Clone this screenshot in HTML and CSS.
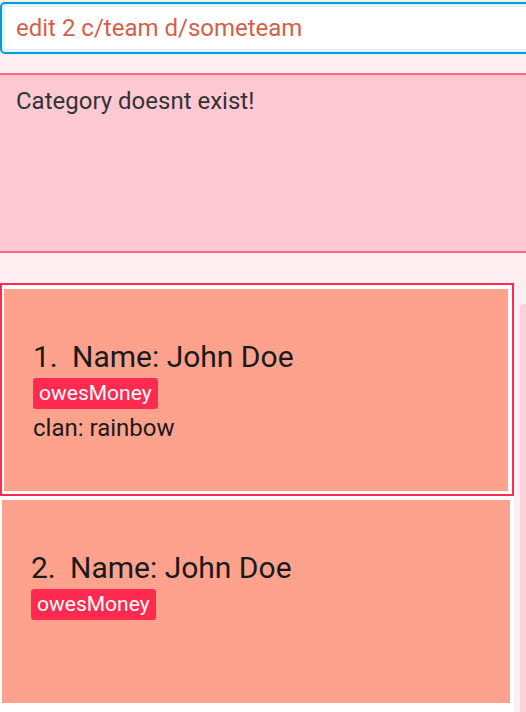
FILE: index.html
```html
<!DOCTYPE html>
<html>
<head>
<meta charset="utf-8">
<link rel="stylesheet" href="styles.css">
</head>
<body>
<div class="app">
  <div class="command">
    <div class="command-field">edit 2 c/team d/someteam</div>
  </div>
  <div class="result">Category doesnt exist!</div>
  <div class="list-area">
    <div class="list">
      <div class="cell selected">
        <div class="card">
          <div class="name-row"><span class="index">1.</span><span class="name">Name: John Doe</span></div>
          <div class="tags"><span class="tag">owesMoney</span></div>
          <div class="clan">clan: rainbow</div>
        </div>
      </div>
      <div class="cell">
        <div class="card">
          <div class="name-row"><span class="index">2.</span><span class="name">Name: John Doe</span></div>
          <div class="tags"><span class="tag">owesMoney</span></div>
        </div>
      </div>
    </div>
    <div class="scroll-track"><div class="scroll-thumb"></div></div>
  </div>
</div>
</body>
</html>
```
FILE: styles.css
```css
html, body {
  margin: 0;
  padding: 0;
}
body {
  background: #ffeef2;
  font-family: Roboto, "Liberation Sans", sans-serif;
  width: 526px;
  height: 712px;
  overflow: hidden;
}
.app {
  display: flex;
  flex-direction: column;
}
.command {
  margin-top: 2px;
  margin-right: -10px;
  height: 52px;
  box-sizing: border-box;
  border: 2px solid #0a9bd6;
  border-radius: 5px;
  background: #ffffff;
  box-shadow: inset 0 0 0 3px #dff3fb, 0 0 0 1px #d6eff9;
  display: flex;
  align-items: center;
  padding-left: 14px;
}
.command-field {
  color: #d3604c;
  font-size: 24px;
}
.result {
  margin-top: 19px;
  margin-right: -10px;
  height: 180px;
  box-sizing: border-box;
  border-top: 2px solid #ff6a80;
  border-bottom: 2px solid #ff6a80;
  background: #ffc9d3;
  color: #333333;
  font-size: 24px;
  padding: 12px 16px;
}
.list-area {
  margin-top: 30px;
  display: flex;
}
.list {
  width: 514px;
  background: #ffffff;
  display: flex;
  flex-direction: column;
}
.cell {
  padding: 4px 4px 2px 2px;
}
.cell.selected {
  border: 2px solid #ff2a4f;
  padding: 4px 4px 3px 2px;
}
.card {
  background: #ffa28d;
  height: 202px;
  box-sizing: border-box;
  padding: 50px 28px 0 29px;
  color: #1a1a1a;
  display: flex;
  flex-direction: column;
  align-items: flex-start;
}
.cell:not(.selected) .card {
  height: 203px;
  padding-left: 29px;
}
.name-row {
  font-size: 30px;
  line-height: 36px;
  display: flex;
}
.index {
  width: 39px;
}
.tags {
  margin-top: 3px;
  display: flex;
}
.tag {
  background: #ff2a4f;
  color: #ffffff;
  font-size: 21px;
  line-height: 31px;
  padding: 0 6px;
  border-radius: 3px;
}
.clan {
  font-size: 24px;
  line-height: 30px;
  margin-top: 4px;
}
.scroll-track {
  width: 12px;
  display: flex;
  justify-content: flex-end;
  padding-top: 21px;
}
.scroll-thumb {
  width: 6px;
  height: 420px;
  background: #ffd0da;
  border-radius: 4px 0 0 0;
}
```
